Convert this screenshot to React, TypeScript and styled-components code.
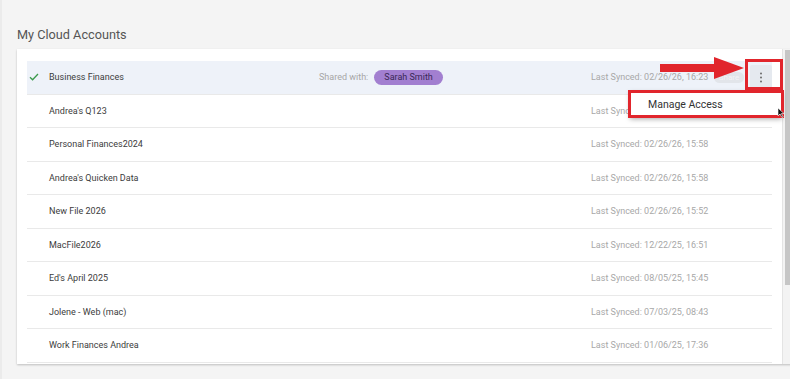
import React from "react";
import styled, { createGlobalStyle } from "styled-components";

const GlobalStyle = createGlobalStyle`
  html, body { margin: 0; padding: 0; background: #f4f4f4; overflow: hidden; }
  body { font-family: Roboto, "Liberation Sans", Arial, sans-serif; }
  * { box-sizing: border-box; }
`;

const Page = styled.div`
  width: 790px;
  height: 379px;
  padding: 27px 0 0 15px;
  border-left: 2px solid #ebebeb;
`;

const Title = styled.h2`
  margin: 0 0 6px 0;
  font-size: 12.7px;
  line-height: 16px;
  font-weight: 400;
  color: #555;
`;

const Section = styled.div`
  position: relative;
  width: 775px;
`;

const Card = styled.div`
  display: flex;
  height: 315px;
  background: #fff;
  box-shadow: 0 1px 2px rgba(0, 0, 0, 0.22);
  overflow: hidden;
`;

const List = styled.div`
  flex: 1;
  padding: 12px 10px 0 10px;
  overflow: hidden;
`;

const ScrollTrack = styled.div`
  width: 10px;
  background: #f3f3f3;
  border-left: 1px solid #e4e4e4;
  padding: 1px 0 0 2px;
`;

const Thumb = styled.div`
  height: 235px;
  background: #c6c6c6;
`;

const Row = styled.div<{ $active?: boolean }>`
  display: flex;
  align-items: center;
  height: 33.5px;
  border-bottom: 1px solid #e9e9e9;
  background: ${(p) => (p.$active ? "#eef2f9" : "#fff")};
  font-size: 9px;
`;

const CheckCell = styled.div`
  width: 22px;
  display: flex;
  align-items: center;
  padding-left: 2px;
`;

const Name = styled.div`
  width: 270px;
  color: #3c3c3c;
`;

const Shared = styled.div`
  width: 272px;
  display: flex;
  align-items: center;
  gap: 6px;
  color: #a6a6a6;
`;

const Pill = styled.span`
  display: inline-flex;
  align-items: center;
  height: 15px;
  padding: 0 10px;
  border-radius: 8px;
  background: #a27fd0;
  color: #3a2856;
`;

const Synced = styled.div`
  flex: 1;
  color: #a8a8a8;
`;

const ShareBtn = styled.span<{ $visible?: boolean }>`
  visibility: ${(p) => (p.$visible ? "visible" : "hidden")};
  width: 30px;
  height: 11px;
  border-radius: 6px;
  background: #e2e5ea;
  color: #f4f4f6;
  font-size: 8px;
  line-height: 11px;
  text-align: center;
  margin-right: 6px;
`;

const KebabBtn = styled.span<{ $visible?: boolean }>`
  visibility: ${(p) => (p.$visible ? "visible" : "hidden")};
  width: 22px;
  height: 25px;
  background: #e5e9ef;
  border-radius: 2px;
  display: flex;
  align-items: center;
  justify-content: center;
`;

const Menu = styled.div`
  position: absolute;
  left: 613px;
  top: 42px;
  width: 152px;
  height: 26px;
  background: #fff;
  box-shadow: 0 2px 5px rgba(0, 0, 0, 0.35);
  display: flex;
  align-items: center;
  padding-left: 18px;
  font-size: 10.5px;
  color: #333;
`;

const RedBox = styled.div`
  position: absolute;
  border: 3px solid #e1252c;
  pointer-events: none;
`;

const KebabHighlight = styled(RedBox)`
  left: 728px;
  top: 10px;
  width: 38px;
  height: 31px;
`;

const MenuHighlight = styled(RedBox)`
  left: 611px;
  top: 41px;
  width: 156px;
  height: 28px;
`;

const Arrow = styled.svg`
  position: absolute;
  left: 643px;
  top: 8px;
`;

const Cursor = styled.svg`
  position: absolute;
  left: 760px;
  top: 59px;
`;

const accounts = [
  { name: "Business Finances", synced: "02/26/26, 16:23", active: true, shared: "Sarah Smith" },
  { name: "Andrea's Q123", synced: "02/26/26, 16:02" },
  { name: "Personal Finances2024", synced: "02/26/26, 15:58" },
  { name: "Andrea's Quicken Data", synced: "02/26/26, 15:58" },
  { name: "New File 2026", synced: "02/26/26, 15:52" },
  { name: "MacFile2026", synced: "12/22/25, 16:51" },
  { name: "Ed's April 2025", synced: "08/05/25, 15:45" },
  { name: "Jolene - Web (mac)", synced: "07/03/25, 08:43" },
  { name: "Work Finances Andrea", synced: "01/06/25, 17:36" },
];

const Check = () => (
  <svg width="10" height="8" viewBox="0 0 10 8">
    <polyline points="1,4.2 3.6,6.8 9,1" fill="none" stroke="#3b9a4c" strokeWidth="1.3" />
  </svg>
);

const Kebab = () => (
  <svg width="4" height="11" viewBox="0 0 4 11">
    <circle cx="2" cy="1.5" r="1" fill="#6b6b6b" />
    <circle cx="2" cy="5.5" r="1" fill="#6b6b6b" />
    <circle cx="2" cy="9.5" r="1" fill="#6b6b6b" />
  </svg>
);

export default function App() {
  return (
    <>
      <GlobalStyle />
      <Page>
        <Title>My Cloud Accounts</Title>
        <Section>
          <Card>
            <List>
              {accounts.map((a) => (
                <Row key={a.name} $active={a.active}>
                  <CheckCell>{a.active && <Check />}</CheckCell>
                  <Name>{a.name}</Name>
                  <Shared>
                    {a.shared && (
                      <>
                        Shared with: <Pill>{a.shared}</Pill>
                      </>
                    )}
                  </Shared>
                  <Synced>Last Synced: {a.synced}</Synced>
                  <ShareBtn $visible={a.active}>Share</ShareBtn>
                  <KebabBtn $visible={a.active}>
                    <Kebab />
                  </KebabBtn>
                </Row>
              ))}
            </List>
            <ScrollTrack>
              <Thumb />
            </ScrollTrack>
          </Card>
          <Menu>Manage Access</Menu>
          <MenuHighlight />
          <KebabHighlight />
          <Arrow width="84" height="22" viewBox="0 0 84 22">
            <rect x="0" y="7" width="56" height="8" fill="#e1252c" />
            <polygon points="54,0 84,11 54,22" fill="#e1252c" />
          </Arrow>
          <Cursor width="8" height="10" viewBox="0 0 8 10">
            <polygon points="1,0 1,8 3,6 5,9.5 6.2,9 4.3,5.6 7,5.6" fill="#111" stroke="#fff" strokeWidth="0.6" />
          </Cursor>
        </Section>
      </Page>
    </>
  );
}
